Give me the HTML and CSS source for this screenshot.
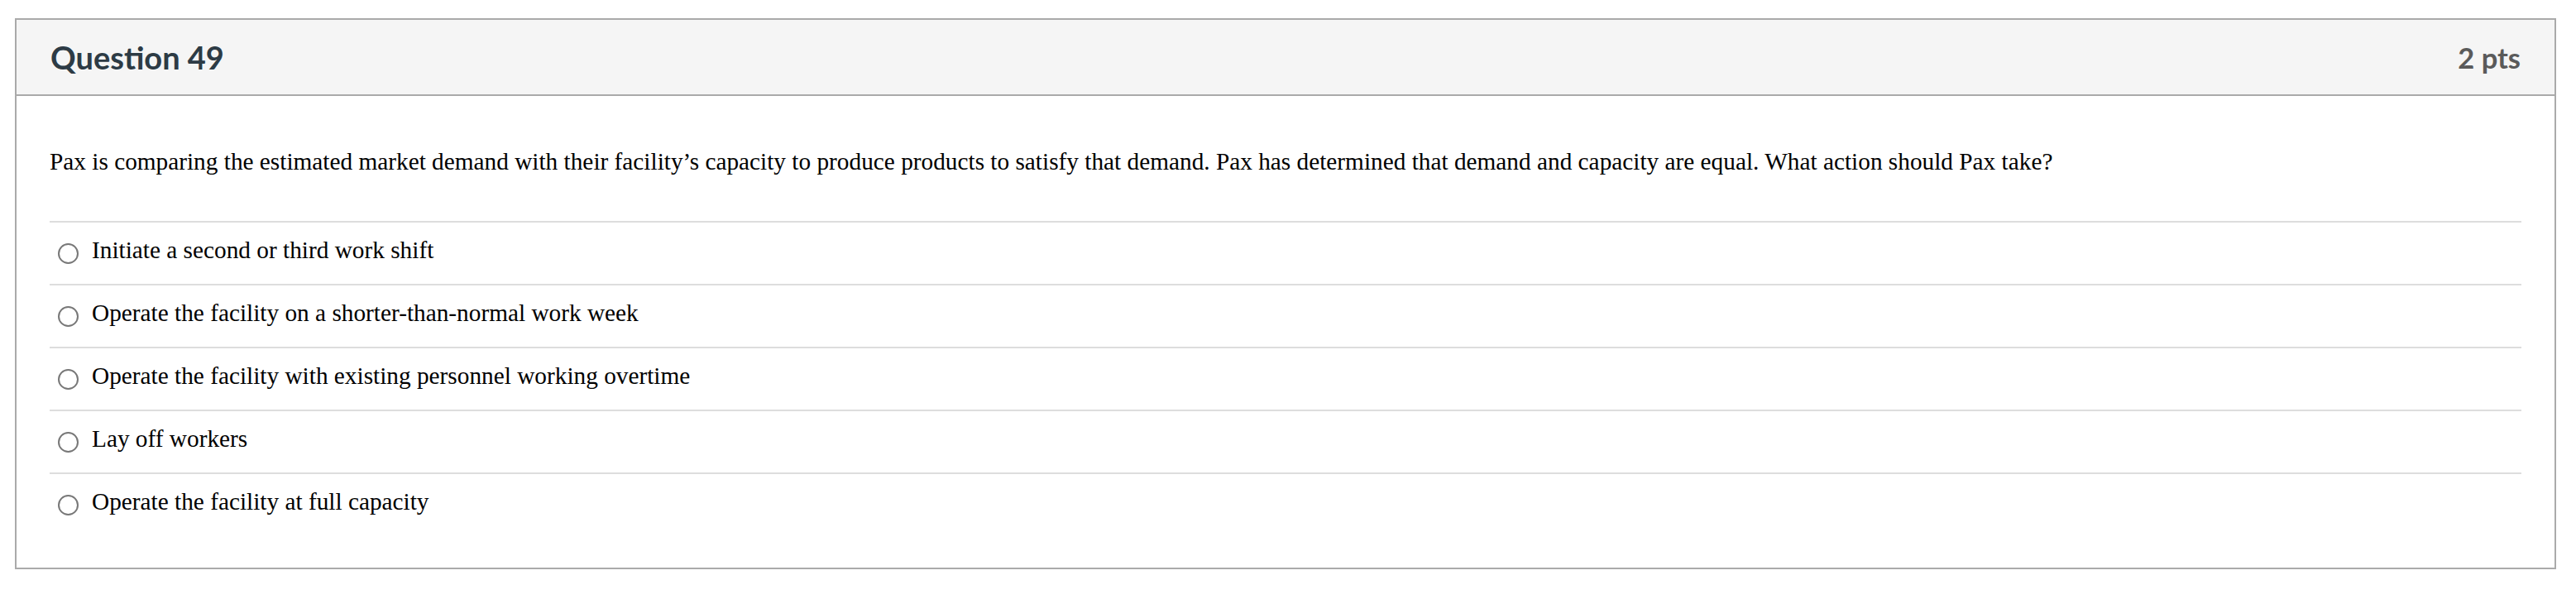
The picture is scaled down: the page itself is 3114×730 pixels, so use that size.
FILE: index.html
```html
<!DOCTYPE html>
<html>
<head>
<meta charset="utf-8">
<link rel="stylesheet" href="styles.css">
</head>
<body>
<div class="question">
  <div class="header">
    <span class="name">Question 49</span>
    <span class="points">2 pts</span>
  </div>
  <div class="content">
    <div class="qtext">Pax is comparing the estimated market demand with their facility’s capacity to produce products to satisfy that demand. Pax has determined that demand and capacity are equal. What action should Pax take?</div>
    <div class="answers">
      <div class="answer"><span class="radio"></span><span class="label">Initiate a second or third work shift</span></div>
      <div class="answer"><span class="radio"></span><span class="label">Operate the facility on a shorter-than-normal work week</span></div>
      <div class="answer"><span class="radio"></span><span class="label">Operate the facility with existing personnel working overtime</span></div>
      <div class="answer"><span class="radio"></span><span class="label">Lay off workers</span></div>
      <div class="answer"><span class="radio"></span><span class="label">Operate the facility at full capacity</span></div>
    </div>
  </div>
</div>
</body>
</html>
```

FILE: styles.css
```css
html, body {
  margin: 0;
  padding: 0;
  background: #ffffff;
}
body {
  padding: 22px 24px 0 18px;
}
.question {
  border: 2px solid #aaaaaa;
  background: #ffffff;
}
.header {
  height: 90px;
  background: #f5f5f5;
  border-bottom: 2px solid #aaaaaa;
  display: flex;
  align-items: center;
  justify-content: space-between;
  padding: 0 41px 0 41px;
  font-family: Lato, "Open Sans", sans-serif;
  font-weight: 700;
}
.name {
  font-size: 38px;
  color: #2d3b45;
}
.points {
  font-size: 34.5px;
  color: #5a5a5a;
}
.content {
  padding: 59px 40px 39px 40px;
  font-family: "Liberation Serif", "Times New Roman", serif;
  font-size: 29.3px;
  line-height: 40px;
  color: #000000;
}
.qtext {
  margin-bottom: 52px;
}
.answer {
  border-top: 2px solid #dddddd;
  display: flex;
  align-items: flex-start;
  padding: 13px 0 21px 0;
}
.radio {
  width: 21px;
  height: 21px;
  border: 2px solid #787878;
  border-radius: 50%;
  margin: 12px 16px 0 10px;
  flex: none;
  background: #ffffff;
}
```
